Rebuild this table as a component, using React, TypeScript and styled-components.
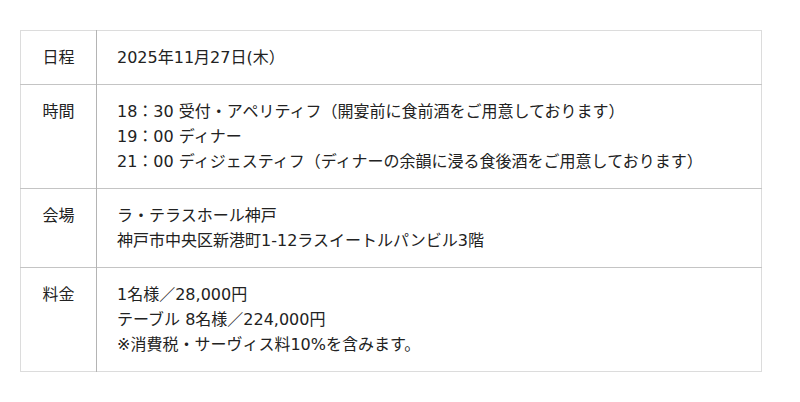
import React from "react";
import styled, { createGlobalStyle } from "styled-components";

const Global = createGlobalStyle`
  html, body { margin: 0; padding: 0; background: #fff; }
  body { font-family: "DejaVu Sans", "Noto Sans CJK JP", sans-serif; color: #222; }
`;

const Page = styled.div`
  padding: 30px 38px 30px 20px;
`;

const Table = styled.table`
  width: 742px;
  border-collapse: collapse;
  border: 1px solid #dcdcdc;
  font-size: 16px;
  line-height: 25px;
`;

const Row = styled.tr`
  & + & > * { border-top: 1px solid #c4c4c4; }
`;

const Label = styled.th`
  width: 76px;
  box-sizing: border-box;
  font-weight: normal;
  text-align: center;
  vertical-align: top;
  padding: 14px 0;
  border-right: 1px solid #b4b4b4;
`;

const Value = styled.td`
  vertical-align: top;
  padding: 14px 0 14px 20px;
`;

const Line = styled.div``;

const rows: { label: string; lines: string[] }[] = [
  { label: "日程", lines: ["2025年11月27日(木）"] },
  {
    label: "時間",
    lines: [
      "18：30 受付・アペリティフ（開宴前に食前酒をご用意しております）",
      "19：00 ディナー",
      "21：00 ディジェスティフ（ディナーの余韻に浸る食後酒をご用意しております）",
    ],
  },
  { label: "会場", lines: ["ラ・テラスホール神戸", "神戸市中央区新港町1-12ラスイートルパンビル3階"] },
  {
    label: "料金",
    lines: ["1名様／28,000円", "テーブル 8名様／224,000円", "※消費税・サーヴィス料10%を含みます。"],
  },
];

export default function App() {
  return (
    <>
      <Global />
      <Page>
        <Table>
          <tbody>
            {rows.map((r) => (
              <Row key={r.label}>
                <Label>{r.label}</Label>
                <Value>
                  {r.lines.map((l) => (
                    <Line key={l}>{l}</Line>
                  ))}
                </Value>
              </Row>
            ))}
          </tbody>
        </Table>
      </Page>
    </>
  );
}
